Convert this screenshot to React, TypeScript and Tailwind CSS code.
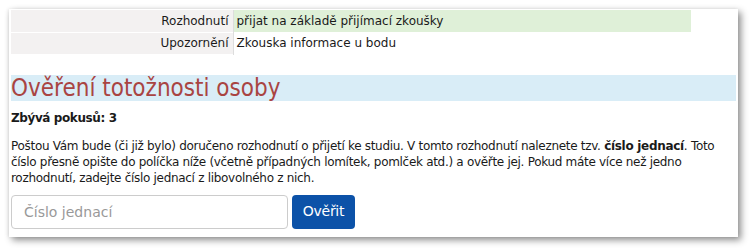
const rows = [
  { label: "Rozhodnutí", value: "přijat na základě přijímací zkoušky", tone: "bg-[#dff0d8]" },
  { label: "Upozornění", value: "Zkouska informace u bodu", tone: "bg-white" },
];

export default function App() {
  return (
    <div className="h-[250px] w-[753px] bg-white pl-[9px] pt-[9px] font-['DejaVu_Sans',sans-serif] text-[12px] text-[#1a1a1a]">
      <div className="h-[228px] w-[729px] bg-white px-[2px] pt-[1px] shadow-[3px_3px_7px_rgba(0,0,0,0.45),-1px_0_3px_rgba(0,0,0,0.08)]">
        <table className="w-[680px] border-collapse">
          <tbody>
            {rows.map((row) => (
              <tr key={row.label} className="h-[22px] border-b border-white">
                <td className="w-[222px] border-r border-[#dddddd] bg-[#f3f1f1] pr-[4px] text-right">
                  {row.label}
                </td>
                <td className={`pl-[3px] ${row.tone}`}>{row.value}</td>
              </tr>
            ))}
          </tbody>
        </table>

        <h2 className="mt-[20px] h-[26px] bg-[#d9edf7] font-['DejaVu_Sans_Condensed','DejaVu_Sans',sans-serif] text-[24px] leading-[27px] text-[#a94442]">
          Ověření totožnosti osoby
        </h2>

        <p className="mt-[8px] font-bold tracking-[-0.4px]">Zbývá pokusů: 3</p>

        <p className="mt-[11px] pr-[4px] leading-[16px] tracking-[-0.3px]">
          Poštou Vám bude (či již bylo) doručeno rozhodnutí o přijetí ke studiu. V tomto
          rozhodnutí naleznete tzv. <b>číslo jednací</b>. Toto číslo přesně opište do políčka
          níže (včetně případných lomítek, pomlček atd.) a ověřte jej. Pokud máte více než
          jedno rozhodnutí, zadejte číslo jednací z libovolného z nich.
        </p>

        <div className="mt-[9px] flex items-center gap-[4px]">
          <input
            className="h-[34px] w-[277px] rounded-[4px] border border-[#cccccc] px-[12px] text-[14px] outline-none placeholder:text-[#999]"
            placeholder="Číslo jednací"
          />
          <button className="h-[34px] w-[63px] rounded-[4px] bg-[#0c52a8] text-[14px] tracking-[-0.3px] text-white">
            Ověřit
          </button>
        </div>
      </div>
    </div>
  );
}
